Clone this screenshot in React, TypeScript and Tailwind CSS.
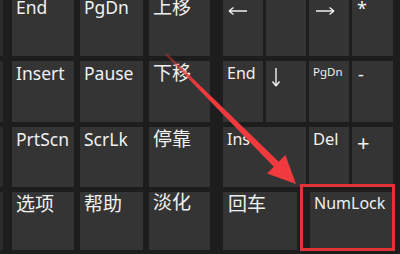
import React from "react";

const key = "bg-[#343434]";
const lat = "text-[17.5px] leading-none pt-[4px] pl-[4px] whitespace-nowrap";
const cjk = "text-[19px] leading-none pt-[3px] pl-[4px] whitespace-nowrap";

function Key({ label, cls }: { label?: React.ReactNode; cls?: string }) {
  return <div className={`${key} ${cls ?? ""}`}>{label}</div>;
}

export default function App() {
  return (
    <div className="relative w-[400px] h-[254px] overflow-hidden bg-[#1d1d1d] text-[#f0f0f0] font-['Noto_Sans','Noto_Sans_CJK_SC',sans-serif]">
      <div className="flex -mt-[5px]">
        <div className="grid grid-rows-[61px_61px_60px_58px] gap-y-[5px] w-[3px]">
          <div className="bg-[#2c2c2c]" />
          <div className="bg-[#2c2c2c]" />
          <div className="bg-[#2c2c2c]" />
          <div className="bg-[#2c2c2c]" />
        </div>
        <div className="ml-[9px] grid grid-cols-[62px_63px_61px] grid-rows-[61px_61px_60px_58px] gap-x-[6px] gap-y-[5px]">
          <Key cls={lat} label="End" />
          <Key cls={lat} label="PgDn" />
          <Key cls={cjk} label="上移" />
          <Key cls={lat} label="Insert" />
          <Key cls={lat} label="Pause" />
          <Key cls={cjk} label="下移" />
          <Key cls={lat} label="PrtScn" />
          <Key cls={lat} label="ScrLk" />
          <Key cls={cjk} label="停靠" />
          <Key cls={cjk} label="选项" />
          <Key cls={cjk} label="帮助" />
          <Key cls={`${cjk} !pt-[1px]`} label="淡化" />
        </div>
        <div className="ml-[13px] grid grid-cols-[40px_40px_40px_41px] grid-rows-[61px_61px_60px_58px] gap-x-[3px] gap-y-[5px]">
          <div className={`${key} pl-[5px] pt-[11px]`}>
            <svg width="20" height="10" viewBox="0 0 20 10" fill="none" stroke="#f0f0f0" strokeWidth="1.4">
              <path d="M1 5 H19 M1 5 L5.5 1.5 M1 5 L5.5 8.5" />
            </svg>
          </div>
          <Key />
          <div className={`${key} pl-[6px] pt-[11px]`}>
            <svg width="20" height="10" viewBox="0 0 20 10" fill="none" stroke="#f0f0f0" strokeWidth="1.4">
              <path d="M1 5 H19 M19 5 L14.5 1.5 M19 5 L14.5 8.5" />
            </svg>
          </div>
          <Key cls="text-[18px] leading-none pt-[4px] pl-[5px]" label="*" />
          <Key cls="text-[16px] leading-none pt-[4px] pl-[4px]" label="End" />
          <div className={`${key} pl-[5px] pt-[6px]`}>
            <svg width="10" height="20" viewBox="0 0 10 20" fill="none" stroke="#f0f0f0" strokeWidth="1.4">
              <path d="M5 1 V19 M5 19 L1.5 14.5 M5 19 L8.5 14.5" />
            </svg>
          </div>
          <Key cls="text-[11.5px] leading-none pt-[5px] pl-[4px]" label="PgDn" />
          <Key cls="text-[18px] leading-none pt-[4px] pl-[6px]" label="-" />
          <Key cls="col-span-2 text-[16px] leading-none pt-[4px] pl-[4px]" label="Ins" />
          <Key cls="text-[16.5px] leading-none pt-[4px] pl-[4px]" label="Del" />
          <Key cls="text-[22px] leading-none pt-[4px] pl-[5px]" label="+" />
          <div className="col-span-4 flex">
            <div className={`${key} w-[74px] text-[19px] leading-none pt-[3px] pl-[5px]`}>回车</div>
            <div className={`${key} ml-auto w-[83px] text-[16px] leading-none pt-[3px] pl-[4px]`}>NumLock</div>
          </div>
        </div>
      </div>

      <div className="absolute left-[300px] top-[184px] w-[95px] h-[67px] border-[3px] border-[#e2333b]" />

      <svg className="absolute left-0 top-0" width="400" height="254" viewBox="0 0 400 254">
        <defs>
          <linearGradient id="ag" x1="166" y1="54" x2="296" y2="184" gradientUnits="userSpaceOnUse">
            <stop offset="0" stopColor="#f03a3d" stopOpacity="0.35" />
            <stop offset="0.25" stopColor="#f03a3d" stopOpacity="1" />
            <stop offset="1" stopColor="#f03a3d" stopOpacity="1" />
          </linearGradient>
        </defs>
        <polygon
          points="166.8,53.3 278.7,161.7 285.4,154.9 296,184 267.0,173.4 273.8,166.7 165.2,54.7"
          fill="url(#ag)"
        />
      </svg>
    </div>
  );
}
